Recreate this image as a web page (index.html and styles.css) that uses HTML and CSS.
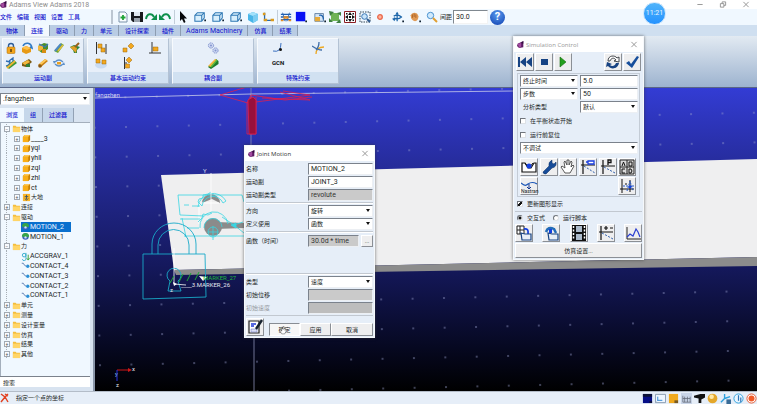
FILE: index.html
```html
<!DOCTYPE html>
<html lang="zh-CN">
<head>
<meta charset="utf-8">
<title>Adams View Adams 2018</title>
<link rel="stylesheet" href="styles.css">
</head>
<body>
<svg class="defs" aria-hidden="true">
  <defs>
    <symbol id="logo" viewBox="0 0 10 10"><path d="M1 4 9 0v9L3 10 0 7z" fill="#5c1a63"/><path d="M1 4 6 3v5L3 10z" fill="#a34aa0"/><path d="M6 3l3-3v4z" fill="#2d0b3a"/></symbol>
    <symbol id="cube" viewBox="0 0 14 12"><path d="M1 4 4 1h8v6l-3 4H1z" fill="#d9effc"/><path d="M1 4 4 1h8v6l-3 4H1zM1 4h8l3-3M9 4v7" fill="none" stroke="#2f78b4" stroke-width="1.200"/><path d="M12 9h2v2h-2z" fill="#123"/></symbol>
    <symbol id="block" viewBox="0 0 10 10"><path d="M1 3 3 1h6v6L7 9H1z" fill="#c47f06"/><path d="M1 3h6v6H1z" fill="#f9ae16"/><path d="M1 3 3 1h6L7 3z" fill="#ffc84f"/></symbol>
    <symbol id="ground" viewBox="0 0 10 10"><path d="M1 1h8v8H1z" fill="#f9b428"/><path d="M5 2v5M3 4h4M3 6l2 2 2-2" fill="none" stroke="#3a5566"/></symbol>
    <symbol id="folder" viewBox="0 0 10 8"><path d="M1 1h3l1 1h4v6H1z" fill="#f3bd3c"/><path d="M1 3h8v5H1z" fill="#ffd567"/></symbol>
    <symbol id="motion" viewBox="0 0 10 10"><circle cx="5" cy="5" r="3.600" fill="#3a62b8"/><path d="M1 5a4 4 0 0 1 8 0L6 6z" fill="#37a548"/><circle cx="5" cy="6" r="1.300" fill="#cfe2ff"/></symbol>
    <symbol id="contact" viewBox="0 0 12 8"><path d="M1 1 3 1 5 4l2 1" fill="none" stroke="#3b5f9e"/><circle cx="9" cy="5" r="2.200" fill="#2b8fd6"/></symbol>
    <symbol id="accel" viewBox="0 0 10 10"><circle cx="3.500" cy="3.500" r="2" fill="none" stroke="#2aa7c9"/><path d="M5.500 1v6a2 2 0 0 1-4 1" fill="none" stroke="#2aa7c9"/><path d="M8 3v5M6.500 7 8 9l1.500-2" fill="none" stroke="#2d9b2d"/></symbol>
    <symbol id="lock" viewBox="0 0 12 12"><path d="M3.500 6V4a2.500 2.500 0 0 1 5 0v2" fill="none" stroke="#2d5d9a" stroke-width="1.400"/><rect x="2" y="5" width="8" height="6.500" rx="1" fill="#f3a51c" stroke="#a96b07" stroke-width=".5"/><path d="M6 7v3" stroke="#4a3510" stroke-width="1.400"/></symbol>
    <symbol id="revolute" viewBox="0 0 12 12"><path d="M1 6 5 4l5 2v4l-5 2-4-2z" fill="#e79a16"/><path d="M1 6 5 4l5 2-4 2z" fill="#ffc04a"/><path d="M2 4C4 0 10 0 11 6l-2-1" fill="none" stroke="#2f79c4" stroke-width="1.600"/></symbol>
    <symbol id="translate" viewBox="0 0 12 12"><path d="M1 4 7 1l4 1v5l-6 4-4-3z" fill="#4b8e2a"/><path d="M1 4 6 3v4l-3 2-2-1z" fill="#f2b53a"/><path d="M2 2l6 3 3-3" fill="none" stroke="#3a76b5" stroke-width="1.200"/><path d="M5 7h4v4H5z" fill="#d78e12"/></symbol>
    <symbol id="cyl" viewBox="0 0 12 12"><path d="M1 9 8 1l3 2-6 8z" fill="#6ea838"/><path d="M2 9 8 2" stroke="#4d87c7" stroke-width="2"/><path d="M5 9 10 3" stroke="#e6bd3c" stroke-width="1.500"/></symbol>
    <symbol id="ball" viewBox="0 0 12 12"><path d="M1 5l4-2 6 2-3 3v3H5L4 8z" fill="#2e8440"/><path d="M1 5l4-1 3 2-1 5-3-3z" fill="#e2a025"/><path d="M6 5l4-4" stroke="#99611b" stroke-width="2"/></symbol>
    <symbol id="screw" viewBox="0 0 12 12"><path d="M1 9 9 3l3 3-8 6z" fill="#3c9636"/><path d="M1 4l4 1-1 3-3 1M4 4l4-3v4" fill="none" stroke="#2d6db4" stroke-width="1.300"/><path d="M2 11l8-7" stroke="#efb534" stroke-width="1.800"/></symbol>
    <symbol id="planar" viewBox="0 0 12 12"><path d="M1 6l7-4 3 3-6 5-4-1z" fill="#7b5a12"/><path d="M1 6l6-3 2 2-5 3z" fill="#f2b73c"/><path d="M5 7h4v3H5z" fill="#33803a"/></symbol>
    <symbol id="rod" viewBox="0 0 12 12"><path d="M1 8 8 2l3 2-7 6z" fill="#c97f13"/><path d="M2 7 8 2l2 1-6 5z" fill="#ffc95a"/><circle cx="3" cy="9" r="1.800" fill="#8a5814"/></symbol>
    <symbol id="hooke" viewBox="0 0 12 12"><path d="M2 5q4-4 8 0M10 7q-4 4-8 0" fill="none" stroke="#5d8fc8" stroke-width="1.200"/><path d="M4 5h4v2.500H4z" fill="#eaa022"/><path d="M0 4l3 0-2 3zM12 8l-3 0 2-3z" fill="#5d8fc8"/></symbol>
    <symbol id="gearbelt" viewBox="0 0 12 12"><path d="M1 10 9 2l2.500 2v3L4 12z" fill="#1d7a2c"/><path d="M1 9 8 2l2 1-6 7z" fill="#f2b63b"/><path d="M4 10 10 3" stroke="#56b83e" stroke-width="1.500"/></symbol>
    <symbol id="primA" viewBox="0 0 12 12"><path d="M1.500 0v12M11 2v10" stroke="#333"/><path d="M3 2h4v4H3zM6 6h4v4H6z" fill="#f4a81e" stroke="#9b6a13" stroke-width=".5"/></symbol>
    <symbol id="primB" viewBox="0 0 12 12"><path d="M1 6h4v4H1zM9 1l3 3-3 3-3-3z" fill="#f4a81e" stroke="#9b6a13" stroke-width=".5"/></symbol>
    <symbol id="primC" viewBox="0 0 12 12"><path d="M3 0v11M0 11h12" stroke="#333" fill="none"/><path d="M4 5h5v4H4z" fill="#f4a81e" stroke="#9b6a13" stroke-width=".5"/></symbol>
    <symbol id="primD" viewBox="0 0 12 12"><ellipse cx="6" cy="8" rx="6" ry="3.500" fill="#c8dbf2"/><path d="M1 2h4v4H1zM7 3h4v4H7z" fill="#f4a81e" stroke="#9b6a13" stroke-width=".5"/></symbol>
    <symbol id="primE" viewBox="0 0 12 12"><path d="M2.500 0v12M2 6h3" stroke="#333"/><path d="M3.500 7h4v4h-4zM7 0l3 3-3 3-3-3z" fill="#f4a81e" stroke="#9b6a13" stroke-width=".5"/></symbol>
    <symbol id="gears" viewBox="0 0 12 12"><g fill="#cfd9f2" stroke="#8294cf"><circle cx="4" cy="3.500" r="2.600" stroke-dasharray="1.500 .6"/><circle cx="8.500" cy="8.500" r="2.600" stroke-dasharray="1.500 .6"/></g><circle cx="4" cy="3.500" r="1" fill="#8294cf"/><circle cx="8.500" cy="8.500" r="1" fill="#8294cf"/></symbol>
    <symbol id="ptcurve" viewBox="0 0 12 12"><path d="M1 9q8 2 8-8" fill="none" stroke="#3a6fc0"/><circle cx="8.500" cy="7.500" r="1.500" fill="#111"/></symbol>
    <symbol id="curves" viewBox="0 0 12 12"><path d="M4 12q0-7 8-7" fill="none" stroke="#eea923" stroke-width="1.300"/><path d="M0 4q6 4 10 4M7 0q0 5-3 8" fill="none" stroke="#3f6ea8" stroke-width="1.300"/></symbol>
    <symbol id="new" viewBox="0 0 12 12"><path d="M2 1h6l2 2v8H2z" fill="#f9fcff" stroke="#7a93ab"/><path d="M6 4v5M3.500 6.500h5" stroke="#20a338" stroke-width="1.800"/></symbol>
    <symbol id="save" viewBox="0 0 12 12"><path d="M0 1h12v10H2L0 9z" fill="#17191e"/><path d="M3 1h6v4H3z" fill="#dfe7ef"/><path d="M3 7h6v4H3z" fill="#9aa3ad"/></symbol>
    <symbol id="redo" viewBox="0 0 12 12"><path d="M1 8C2 2 7 2 9 6" fill="none" stroke="#0d8f4c" stroke-width="2"/><path d="M12 3v6H6z" fill="#0d8f4c"/></symbol>
    <symbol id="arrow" viewBox="0 0 12 12"><path d="M4 0v10l2-2 2 4 1.500-1L8 7.500h3z" fill="#05070a"/></symbol>
    <symbol id="ccube" viewBox="0 0 12 12"><path d="M6 1l5 2v6l-5 3-5-3V3z" fill="#48b5e8"/><path d="M6 1l5 2-5 2-5-2z" fill="#a4e2fb"/><path d="M6 5v7l5-3V3z" fill="#7bcdf2"/></symbol>
    <symbol id="axes" viewBox="0 0 14 12"><path d="M3 1v9h9" fill="none" stroke="#2b69a8" stroke-width="1.500"/><path d="M2 8h4v3H2zM1 1h3v3H1zM10 8h4v3h-4z" fill="#dc9b1e"/></symbol>
    <symbol id="grid" viewBox="0 0 14 12"><path d="M1 3h12M1 6h12M1 9h12" stroke="#1f5fb2" stroke-width="1.500"/><path d="M3 1l3 10M11 1 8 11" stroke="#1f5fb2"/><path d="M4 5h6v3H4zM1 9h3v2H1zM10 9h3v2h-3z" fill="#e48e28"/></symbol>
    <symbol id="blue" viewBox="0 0 14 12"><path d="M1 0h11v11H1z" fill="#0711f5"/><path d="M12 10h2v2h-2z" fill="#123"/></symbol>
    <symbol id="winrot" viewBox="0 0 14 12"><path d="M1 2h10v9H1z" fill="#d5e5f6" stroke="#57799d"/><path d="M1 6h6v5H1z" fill="#e6aa38"/><path d="M6 4q5-1 5 5" fill="none" stroke="#1c62ae" stroke-width="1.500"/><path d="M12 10h2v2h-2z" fill="#123"/></symbol>
    <symbol id="fit" viewBox="0 0 12 12"><path d="M2 2h8v8H2z" fill="#6fb356"/><path d="M0 0l5 1-4 4zM12 1v4L8 2zM0 7l4 4-4 0zM12 12H7l4-4z" fill="#3f7f42"/></symbol>
    <symbol id="center" viewBox="0 0 12 12"><path d="M.5.500h11v11H.5z" fill="#fff" stroke="#8b1d22"/><path d="M6 1l2 3H4zM6 11 4 8h4zM1 6l3-2v4zM11 6 8 8V4zM5 5h2v2H5zM2 2h1.500v1.500H2zM8.500 2H10v1.500H8.500zM2 8.500h1.500V10H2zM8.500 8.500H10V10H8.500z" fill="#111"/></symbol>
    <symbol id="zoombox" viewBox="0 0 12 12"><path d="M1 1h10v10H1z" fill="none" stroke="#345" stroke-dasharray="1.500 1"/><circle cx="5.500" cy="5.500" r="2.800" fill="#c9e4fa" stroke="#3a77b5"/><path d="M8 8l3 3" stroke="#2e5c91" stroke-width="2"/></symbol>
    <symbol id="dot" viewBox="0 0 12 12"><circle cx="6" cy="6" r="2.300" fill="#ffb49d" stroke="#e9674a" stroke-width="1.300"/></symbol>
    <symbol id="orbit" viewBox="0 0 14 12"><path d="M6 1v10M2 5q5-3 9 1-4 4-9 1" fill="none" stroke="#1d67ab" stroke-width="1.500"/><path d="M4 3l2-3 2 3zM0 8l4-1-1 4z" fill="#1d67ab"/><path d="M12 10h2v2h-2z" fill="#123"/></symbol>
    <symbol id="pan" viewBox="0 0 14 12"><path d="M2 4q1-3 4-3 4 0 5 4 0 5-4 6-5-1-5-7" fill="#e09a55"/><path d="M4 7V3M6 6V2M8 7V3" stroke="#a85f22"/><path d="M12 10h2v2h-2z" fill="#123"/></symbol>
    <symbol id="mag" viewBox="0 0 12 12"><circle cx="4.500" cy="4.500" r="3.200" fill="#d0eafd" stroke="#4b93d0"/><path d="M7 7l4 4" stroke="#e19f31" stroke-width="2"/></symbol>
    <symbol id="rewind" viewBox="0 0 16 16"><path d="M1 3h2v10H1zM9 3v10L3 8zM15 3v10L9 8z" fill="#174383"/></symbol>
    <symbol id="stop" viewBox="0 0 16 16"><path d="M5 5h7v6H5z" fill="#174383"/></symbol>
    <symbol id="play" viewBox="0 0 16 16"><path d="M5 3l6 5-6 5z" fill="#24a01c" stroke="#14690e" stroke-width=".6"/></symbol>
    <symbol id="reload" viewBox="0 0 16 16"><path d="M3 7C3 1 10 1 12 4l2-1v5l-5-1 2-1C9 3 6 4 5 7z" fill="#fff" stroke="#30343a" stroke-width=".9"/><path d="M14 9c-1 6-8 7-11 3l-2 1 1-5 5 2-2 1c2 2 5 1 6-2z" fill="#174383"/></symbol>
    <symbol id="check" viewBox="0 0 16 16"><path d="M2 9l3-2 2 3 6-8 2 1-7 11z" fill="#174e9b"/></symbol>
    <symbol id="valley" viewBox="0 0 16 16"><path d="M1 4h3l3 5h3l3-5h2v9H1z" fill="#fff" stroke="#111" stroke-width="1.200"/><path d="M4 4l4 5 4-5" fill="none" stroke="#111"/><circle cx="8" cy="7" r="2.500" fill="#1440e0"/></symbol>
    <symbol id="wrench" viewBox="0 0 16 16"><path d="M2 13 8 7q-1-4 3-6v3l2 1 2-2q1 5-4 6L5 15q-3 0-3-2" fill="#174c99" stroke="#0b2d60" stroke-width=".5"/></symbol>
    <symbol id="hand" viewBox="0 0 16 16"><path d="M5 14 1 8l1-1 3 2-1-6 1-1 2 4V1h2v5l2-4 1 1-1 5 2-2 1 1-4 7z" fill="#fff" stroke="#333" stroke-width=".8"/></symbol>
    <symbol id="plotd" viewBox="0 0 16 16"><path d="M3 1v14M1 6h14" fill="none" stroke="#111" stroke-width="1.200"/><path d="M4 7l11 7" stroke="#2b5cab" stroke-dasharray="2 1.500"/><path d="M8 2h6v3H8zM6 3h2" fill="#fff" stroke="#1b3fe0" stroke-width="1.300"/></symbol>
    <symbol id="plotp" viewBox="0 0 16 16"><path d="M3 1v14M1 7h14" fill="none" stroke="#111" stroke-width="1.200"/><path d="M4 8l11 6" stroke="#2b5cab" stroke-dasharray="2 1.500"/><path d="M8 6V1h3v2.500H8" fill="none" stroke="#111" stroke-width="1.300"/></symbol>
    <symbol id="table" viewBox="0 0 16 16"><path d="M1 1h14v14H1zM8 1v14M1 8h14" fill="#d9d9d9" stroke="#222"/><path d="M3 7l1.500-4L6 7M10 3h3v4h-3zM6 10H3v4h3M10 10h2l1 2-1 2h-2z" fill="none" stroke="#111"/></symbol>
    <symbol id="neutral" viewBox="0 0 16 12"><path d="M0 3q4 4 7 1 4-3 9 0" fill="none" stroke="#1c57b8" stroke-width="1.200"/><path d="M8 4v5M6 7l2 2 2-2" fill="none" stroke="#15378f"/></symbol>
    <symbol id="plotc" viewBox="0 0 16 16"><path d="M3 1v14M1 11h14M11 2v12M6 6h2" fill="none" stroke="#111"/><path d="M4 8h11M8 13l3-10 3 10" fill="none" stroke="#2458c8" stroke-dasharray="2 1"/><circle cx="11" cy="9" r="1.500" fill="#1440e0"/></symbol>
    <symbol id="build" viewBox="0 0 16 16"><path d="M1 1h7v8H1zM4 1v8M1 5h7" fill="#fff" stroke="#222"/><path d="M8 4q5-1 4 5" fill="none" stroke="#1440e0" stroke-width="1.800"/><path d="M5 8l4 1 6 0v6H6z" fill="#e8eef6" stroke="#174383" stroke-width="1.200"/></symbol>
    <symbol id="reset" viewBox="0 0 16 16"><path d="M3 7q2-6 8-3l2 4" fill="none" stroke="#236cb8" stroke-width="2.500"/><path d="M6 4h3v4H6z" fill="#1440e0"/><path d="M5 8l4 1 6 0v6H6z" fill="#e8eef6" stroke="#174383" stroke-width="1.200"/></symbol>
    <symbol id="film" viewBox="0 0 16 16"><path d="M1 0h14v16H1z" fill="#111"/><path d="M5 1h6v6H5zM5 9h6v6H5z" fill="#aebccc"/><path d="M2.500 1v14M13.500 1v14" stroke="#fff" stroke-width="1.500" stroke-dasharray="2 1.500"/></symbol>
    <symbol id="plotpm" viewBox="0 0 16 16"><path d="M3 1v14M1 7h14M6 3h4M12 3h3M8 1v4" fill="none" stroke="#111" stroke-width="1.200"/><path d="M4 8l11 6" stroke="#2b5cab" stroke-dasharray="2 1.500"/></symbol>
    <symbol id="chart" viewBox="0 0 16 16"><path d="M2 2v12h14" fill="none" stroke="#222"/><path d="M2 12l3-3 3 2 3-7 2 3 2 5" fill="none" stroke="#2a3fd0" stroke-width="1.200"/></symbol>
    <symbol id="edit" viewBox="0 0 16 16"><path d="M2 2h10v12H2z" fill="#fff" stroke="#222" stroke-width="1.200"/><path d="M4 5h5M4 7h3" stroke="#2038d8" stroke-width="1.500"/><path d="M4 10h6v3H4z" fill="#dcdff5" stroke="#6670c0" stroke-width=".5"/><path d="M15 1 9 10" stroke="#16222f" stroke-width="2.400"/></symbol>
  </defs>
</svg>

<div class="app">
  <header class="titlebar">
    <svg class="logo"><use href="#logo"/></svg>
    <h1>Adams View Adams 2018</h1>
    <div class="winctl">
      <button aria-label="最小化"><svg viewBox="0 0 8 8"><path d="M1 4h6"/></svg></button>
      <button aria-label="还原"><svg viewBox="0 0 8 8"><path d="M1 3h4v4H1zM3 3V1h4v4H5"/></svg></button>
      <button aria-label="关闭"><svg viewBox="0 0 8 8"><path d="M1 1l6 6M7 1 1 7"/></svg></button>
    </div>
  </header>

  <div class="toolrow">
    <nav class="menu"><button>文件</button><button>编辑</button><button>视图</button><button>设置</button><button>工具</button></nav>
    <div class="tools t14 first">
      <button aria-label="新建"><svg><use href="#new"/></svg></button>
      <button aria-label="保存"><svg><use href="#save"/></svg></button>
      <button aria-label="重做"><svg><use href="#redo"/></svg></button>
      <button aria-label="撤销" class="flip"><svg><use href="#redo"/></svg></button>
    </div>
    <div class="tools t14 ruled"><button aria-label="选择"><svg><use href="#arrow"/></svg></button></div>
    <div class="tools t18">
      <button aria-label="前视"><svg><use href="#cube"/></svg></button>
      <button aria-label="右视"><svg><use href="#cube"/></svg></button>
      <button aria-label="顶视"><svg><use href="#cube"/></svg></button>
    </div>
    <div class="tools t15">
      <button aria-label="轴测"><svg><use href="#ccube"/></svg></button>
      <button aria-label="坐标"><svg><use href="#axes"/></svg></button>
    </div>
    <div class="tools t15 ruled">
      <button aria-label="栅格"><svg><use href="#grid"/></svg></button>
      <button aria-label="颜色"><svg><use href="#blue"/></svg></button>
    </div>
    <div class="tools t15 wide">
      <button aria-label="视图布局"><svg><use href="#winrot"/></svg></button>
      <button aria-label="适合窗口"><svg><use href="#fit"/></svg></button>
      <button aria-label="居中"><svg><use href="#center"/></svg></button>
      <button aria-label="框选缩放"><svg><use href="#zoombox"/></svg></button>
      <button aria-label="选点"><svg><use href="#dot"/></svg></button>
    </div>
    <div class="tools t17">
      <button aria-label="旋转"><svg><use href="#orbit"/></svg></button>
      <button aria-label="平移"><svg><use href="#pan"/></svg></button>
      <button aria-label="缩放"><svg><use href="#mag"/></svg></button>
    </div>
    <label class="spacing">间距 <input value="30.0"></label>
    <button class="help" aria-label="帮助">?</button>
  </div>
  <div class="clock">11:21</div>

  <nav class="tabs">
    <button>物体</button><button class="on">连接</button><button>驱动</button><button>力</button><button>单元</button><button>设计探索</button><button>插件</button><button class="latin">Adams Machinery</button><button>仿真</button><button>结果</button>
  </nav>

  <div class="ribbon">
    <section class="panel">
      <div class="icons five">
        <svg><use href="#lock"/></svg><svg><use href="#revolute"/></svg><svg><use href="#translate"/></svg><svg><use href="#cyl"/></svg><svg><use href="#ball"/></svg>
        <svg><use href="#screw"/></svg><svg><use href="#planar"/></svg><svg><use href="#rod"/></svg><svg><use href="#hooke"/></svg>
      </div>
      <h2>运动副</h2>
    </section>
    <section class="panel">
      <div class="icons three">
        <svg><use href="#primA"/></svg><svg><use href="#primB"/></svg><svg><use href="#primC"/></svg>
        <svg><use href="#primD"/></svg><svg><use href="#primE"/></svg>
      </div>
      <h2>基本运动约束</h2>
    </section>
    <section class="panel">
      <div class="icons one"><svg><use href="#gears"/></svg><svg><use href="#gearbelt"/></svg></div>
      <h2>耦合副</h2>
    </section>
    <section class="panel">
      <div class="icons two"><svg><use href="#ptcurve"/></svg><svg><use href="#curves"/></svg><span>GCN</span></div>
      <h2>特殊约束</h2>
    </section>
  </div>

  <main class="work">
    <aside class="side">
      <span class="sel model"><select aria-label="模型"><option>.fangzhen</option></select></span>
      <nav class="sidetabs"><button class="on">浏览</button><button>组</button><button>过滤器</button></nav>
      <ul class="tree">
        <li><i>−</i><svg><use href="#folder"/></svg>物体</li>
        <li class="sub"><i>+</i><svg><use href="#block"/></svg>____3</li>
        <li class="sub"><i>+</i><svg><use href="#block"/></svg>yql</li>
        <li class="sub"><i>+</i><svg><use href="#block"/></svg>yhll</li>
        <li class="sub"><i>+</i><svg><use href="#block"/></svg>zql</li>
        <li class="sub"><i>+</i><svg><use href="#block"/></svg>zhl</li>
        <li class="sub"><i>+</i><svg><use href="#block"/></svg>ct</li>
        <li class="sub cjk"><i>+</i><svg><use href="#ground"/></svg>大地</li>
        <li><i>+</i><svg><use href="#folder"/></svg>连接</li>
        <li><i>−</i><svg><use href="#folder"/></svg>驱动</li>
        <li class="leaf"><span class="picked"><svg><use href="#motion"/></svg>MOTION_2</span></li>
        <li class="leaf"><svg><use href="#motion"/></svg>MOTION_1</li>
        <li><i>−</i><svg><use href="#folder"/></svg>力</li>
        <li class="leaf"><svg><use href="#accel"/></svg>ACCGRAV_1</li>
        <li class="leaf"><svg><use href="#contact"/></svg>CONTACT_4</li>
        <li class="leaf"><svg><use href="#contact"/></svg>CONTACT_3</li>
        <li class="leaf"><svg><use href="#contact"/></svg>CONTACT_2</li>
        <li class="leaf"><svg><use href="#contact"/></svg>CONTACT_1</li>
        <li><i>+</i><svg><use href="#folder"/></svg>单元</li>
        <li><i>+</i><svg><use href="#folder"/></svg>测量</li>
        <li><i>+</i><svg><use href="#folder"/></svg>设计变量</li>
        <li><i>+</i><svg><use href="#folder"/></svg>仿真</li>
        <li><i>+</i><svg><use href="#folder"/></svg>结果</li>
        <li><i>+</i><svg><use href="#folder"/></svg>其他</li>
      </ul>
      <input class="search" aria-label="搜索" value="搜索">
    </aside>

    <div class="view">
      <svg viewBox="95 88 662 303" preserveAspectRatio="xMinYMin slice">
        <defs>
          <pattern id="dots" width="31.400" height="29.700" patternUnits="userSpaceOnUse" patternTransform="translate(125 126) rotate(-1.300)"><path d="M0 1h2" stroke="#9aa0cf" stroke-width=".8"/></pattern>
        </defs>
        <path d="M95 88h662v303H95z" fill="url(#dots)"/>
        <path d="M95 98 251 94 515 91" fill="none" stroke="#c9cdea" stroke-width=".8"/>
        <path d="M251 88v57M254 337v54" stroke="#8b91b5" stroke-width=".8"/>
        <g fill="none" stroke="#e0204c" stroke-width=".8">
          <path d="M220 95l27-8M220 95l28 8 62-8-27-4M247 103l4-8 34 5 27-3M247 103v31h9V97M251 96v38M254 98v35M262 98l48 2-30-8"/>
          <path d="M248 100l5-3 3 3v34h-7z" fill="#99103c"/>
        </g>
        <path d="M161 175 757 159V257L174 270z" fill="#efeff0"/>
        <path d="M174 270 757 257v9L176 275z" fill="#8c8c8c"/>
        <g fill="#8b8b8b">
          <path d="M202 203a9 9 0 0 1 18 0l-8-4z"/>
          <circle cx="213" cy="227" r="9"/>
          <path d="M215 222l30 1v5l-30 1z"/>
        </g>
        <path d="M199 203V224M202 203h17" stroke="#fff" fill="none"/>
        <g fill="none" stroke="#39d6e2" stroke-width=".8">
          <path d="M178 195h64l2 7M178 195l2 20 24 1M180 219h20M184 236h60M182 218l4 19M184 205h5M192 206h8M187 228h12"/>
          <path d="M198 207a15 15 0 0 1 28-6l-3 2a11 11 0 0 0-21 3l-4-4 1-3 4-1v-3l5-1 3-2"/>
          <path d="M200 228a13 13 0 0 1 28-4M198 222l4-4 1-4 5 1 4-2M204 228a9 9 0 0 1 18-1"/>
          <circle cx="213" cy="232" r="5"/><path d="M213 226v14M208 232h10M222 217l12 8 9-3M234 225l10 8"/>
          <path d="M231 225l5-2v5z" fill="#39d6e2"/>
        </g>
        <g fill="none" stroke="#18a9c8" stroke-width=".9">
          <path d="M143 254h62l1 43-63 2zM152 254v-10a22 21 0 0 1 44 0v10M158 254v-9a15 15 0 0 1 31 0v9"/>
          <path d="M170 281a7 7 0 1 1 8 0l3 10h-13z"/>
        </g>
        <path d="M211 173v38M174 248v36l12 1" fill="none" stroke="#fff" stroke-width=".8"/>
        <path d="M170 283l4-7M179 282l4-8M187 281l4-8M195 280l4-8" stroke="#20a735"/>
        <path d="M173 282l4 2-3 2zM199 276l8 1-4 4z" fill="#fff"/>
        <g class="marks">
          <text x="95" y="97" fill="#dadcf2">fangzhen</text>
          <text x="203" y="280" fill="#20b83c">MARKER_27</text>
          <text x="181" y="287" fill="#e5e7f0">____3.MARKER_26</text>
          <text x="203" y="173" fill="#d8dbef">Y</text>
          <text x="170" y="292" fill="#e5e7f0">z</text>
          <text x="132" y="371" fill="#e5e7f0">x</text>
          <text x="115" y="376" fill="#a8dbe5">y</text>
          <text x="116" y="387" fill="#e5e7f0">z</text>
        </g>
        <path d="M117 370h13" stroke="#cf1717"/><path d="M128 368l4 2-4 2z" fill="#cf1717"/>
        <path d="M117 370v11" stroke="#2433e4"/>
      </svg>
    </div>
  </main>

  <footer class="status">
    <svg class="hint" viewBox="0 0 10 10"><path d="M1 1l4 3 3 5M8 1 5 4 1 9M5 1l3 2" fill="none" stroke="#e2401f" stroke-width="1.400"/></svg>
    <span>指定一个点的坐标</span>
    <div class="tray">
      <svg viewBox="0 0 12 12"><path d="M1 1h10v10H1z" fill="#060e86"/><path d="M1 1h10v3H1zM8 9h3v2H8z" fill="#0b1136"/></svg>
      <svg viewBox="0 0 12 12"><path d="M.5 1.500h11v9H.5z" fill="#eef6ff" stroke="#8697ac"/><path d="M3 4v4l-1 1M3 8h5" fill="none" stroke="#2b84d2"/></svg>
      <svg viewBox="0 0 12 12"><path d="M1 1h10v10H1z" fill="#f0a91d"/><path d="M7 8h4v3H7z" fill="#7a5b22"/></svg>
      <svg viewBox="0 0 12 12"><path d="M0 0h12v12H0z" fill="#c9d5e8"/><path d="M2 3v7h9M4 4v6M7 4v6M10 4v6M2 6h8" fill="none" stroke="#5e6673" stroke-width=".8"/></svg>
      <svg viewBox="0 0 12 12"><path d="M0 3 7 1h5v4L8 7v4H5V6L0 5z" fill="#111"/></svg>
      <svg viewBox="0 0 12 12"><circle cx="6" cy="6" r="5.300" fill="#e4a72a"/><circle cx="5" cy="4" r="2.500" fill="#ffe9a8"/></svg>
      <svg viewBox="0 0 12 12"><path d="M5 1v5L1 10M5 6l6-2" fill="none" stroke="#2da0dd" stroke-width="1.500"/><path d="M7 7h5v5H7z" fill="#3a6c97"/></svg>
      <svg viewBox="0 0 12 12"><circle cx="6" cy="6" r="5" fill="#e8f5ff" stroke="#2aa0dc"/><path d="M6 2.500v6M8.500 5v5" stroke="#2a74b8" stroke-width="1.300"/></svg>
      <svg viewBox="0 0 12 12"><circle cx="6" cy="6" r="5" fill="#fff" stroke="#e4532b"/><circle cx="6" cy="6" r="3.300" fill="#f05a28"/></svg>
    </div>
  </footer>

  <form class="dialog joint">
    <header><svg class="logo"><use href="#logo"/></svg><h2>Joint Motion</h2><button type="button" aria-label="关闭"><svg viewBox="0 0 8 8"><path d="M1 1l6 6M7 1 1 7"/></svg></button></header>
    <div class="fields">
      <label for="j1">名称</label><input id="j1" value="MOTION_2">
      <label for="j2">运动副</label><input id="j2" value="JOINT_3">
      <label for="j3">运动副类型</label><input id="j3" class="off" value="revolute" readonly>
    </div>
    <div class="fields">
      <label for="j4">方向</label><span class="sel"><select id="j4"><option>旋转</option></select></span>
      <label for="j5">定义使用</label><span class="sel"><select id="j5"><option>函数</option></select></span>
    </div>
    <div class="fields tall">
      <label for="j6">函数（时间）</label><span class="pair"><input id="j6" class="off" value="30.0d * time"><button type="button">...</button></span>
    </div>
    <div class="fields">
      <label for="j7">类型</label><span class="sel"><select id="j7"><option>速度</option></select></span>
      <label for="j8">初始位移</label><input id="j8" class="off">
      <label for="j9" class="dim">初始速度</label><input id="j9" class="off deep" disabled>
    </div>
    <div class="actions">
      <button type="button" class="tile" aria-label="注释"><svg><use href="#edit"/></svg></button>
      <button type="button" class="ok">确定<svg class="cursor" viewBox="0 0 16 16"><use href="#hand"/></svg></button><button type="button">应用</button><button type="button" class="cancel">取消</button>
    </div>
  </form>

  <form class="dialog sim">
    <header><svg class="logo"><use href="#logo"/></svg><h2>Simulation Control</h2><button type="button" aria-label="关闭"><svg viewBox="0 0 8 8"><path d="M1 1l6 6M7 1 1 7"/></svg></button></header>
    <div class="player">
      <button type="button" class="tile" aria-label="重置"><svg><use href="#rewind"/></svg></button>
      <button type="button" class="tile" aria-label="停止"><svg><use href="#stop"/></svg></button>
      <button type="button" class="tile" aria-label="开始"><svg><use href="#play"/></svg></button>
      <button type="button" class="tile push" aria-label="重新运行"><svg><use href="#reload"/></svg></button>
      <button type="button" class="tile" aria-label="验证"><svg><use href="#check"/></svg></button>
    </div>
    <div class="box">
      <div class="params">
        <span class="sel"><select aria-label="时间类型"><option>终止时间</option></select></span><input aria-label="终止时间" value="5.0">
        <span class="sel"><select aria-label="步类型"><option>步数</option></select></span><input aria-label="步数" value="50">
        <label for="s1">分析类型</label><span class="sel"><select id="s1"><option>默认</option></select></span>
      </div>
      <label class="tick"><input type="checkbox">在平衡状态开始</label>
      <label class="tick"><input type="checkbox">运行前复位</label>
      <span class="sel"><select aria-label="调试"><option>不调试</option></select></span>
      <div class="tiles six">
        <button type="button" class="tile" aria-label="静平衡"><svg><use href="#valley"/></svg></button>
        <button type="button" class="tile" aria-label="装配"><svg><use href="#wrench"/></svg></button>
        <button type="button" class="tile" aria-label="手动"><svg><use href="#hand"/></svg></button>
        <button type="button" class="tile" aria-label="线性"><svg><use href="#plotd"/></svg></button>
        <button type="button" class="tile" aria-label="参数"><svg><use href="#plotp"/></svg></button>
        <button type="button" class="tile" aria-label="矩阵"><svg><use href="#table"/></svg></button>
        <button type="button" class="tile nastran"><svg><use href="#neutral"/></svg><span>Nastran</span></button>
        <button type="button" class="tile last" aria-label="振动"><svg><use href="#plotc"/></svg></button>
      </div>
    </div>
    <label class="tick update"><input type="checkbox" checked>更新图形显示</label>
    <div class="mode">
      <label class="tick"><input type="radio" name="m" checked>交互式</label>
      <label class="tick"><input type="radio" name="m">运行脚本</label>
    </div>
    <div class="tiles five">
      <button type="button" class="tile" aria-label="保存模型"><svg><use href="#build"/></svg></button>
      <button type="button" class="tile" aria-label="恢复模型"><svg><use href="#reset"/></svg></button>
      <button type="button" class="tile" aria-label="动画"><svg><use href="#film"/></svg></button>
      <button type="button" class="tile" aria-label="特征值"><svg><use href="#plotpm"/></svg></button>
      <button type="button" class="tile" aria-label="绘图"><svg><use href="#chart"/></svg></button>
    </div>
    <button type="button" class="settings">仿真设置...</button>
  </form>
</div>
</body>
</html>
```

FILE: styles.css
```css
* { box-sizing: border-box; }

body {
  margin: 0;
  font: 6px/8px Roboto, "Noto Sans CJK SC", sans-serif;
  color: #1b1f26;
  overflow: hidden;
}

button, input, select {
  font: inherit;
  color: inherit;
  margin: 0;
  padding: 0;
  border: 0;
  border-radius: 0;
  background: none;
}

h1, h2, ul { margin: 0; padding: 0; font: inherit; list-style: none; }
svg { display: block; }
.defs { position: absolute; width: 0; height: 0; }

.app {
  position: relative;
  height: 100vh;
  display: grid;
  grid-template-rows: 9px 16px 11px 52px minmax(0, 1fr) 13px;
  grid-template-columns: minmax(0, 1fr);
  background: #e6eef8;
}

/* Title bar */
.titlebar { display: flex; align-items: center; background: #fff; }
.logo { width: 7px; height: 7px; }
.titlebar h1 { margin-left: 2px; font-size: 7px; color: #8c8c8c; }
.winctl { display: flex; gap: 15px; margin-left: auto; margin-right: 7px; }
.winctl svg, .dialog header button svg { width: 8px; height: 7px; fill: none; stroke: #8d8d8d; stroke-width: 1; }

/* Menu and toolbar */
.toolrow { display: flex; align-items: center; background: #f0f8ff; }
.menu { display: flex; gap: 5px; width: 111px; color: #1515cf; font-weight: 500; }
.tools { display: flex; height: 14px; align-items: center; }
.tools button { height: 12px; display: flex; justify-content: center; }
.tools svg { width: 12px; height: 12px; }
.t14 button { width: 14px; }
.t15 button { width: 15px; }
.t17 button { width: 17px; }
.t18 button { width: 18px; }
.t17, .t18 { margin-left: 2px; }
.first { border-left: 2px solid #bcc6d1; padding-left: 3px; }
.ruled { border-left: 1px solid #c3ced9; margin-left: 2px; }
.wide { margin-left: 4px; }
.flip svg { transform: scaleX(-1); }
.spacing { display: flex; align-items: center; gap: 1px; color: #222; }
.spacing input { width: 35px; height: 14px; padding-left: 2px; font-size: 7px; background: #fff; border: 1px solid; border-color: #808890 #f3f3f3 #f3f3f3 #808890; }
.help { width: 15px; height: 15px; margin-left: 2px; border-radius: 50%; background: radial-gradient(circle at 50% 30%, #5b9cf0, #0c3eae); color: #fff; font-size: 11px; font-weight: 700; line-height: 14px; }

.clock {
  position: absolute; top: 2px; right: 91px;
  width: 23px; height: 23px; border-radius: 50%;
  border: 1px solid #cfe6fb;
  background: linear-gradient(#50b4fa, #2492ff);
  color: #e9f6ff; font-size: 7px; line-height: 21px; text-align: center;
}

/* Ribbon tabs */
.tabs { display: flex; background: #cfdff0; color: #1515cf; font-weight: 500; }
.tabs button { background: #b9cce4; border-right: 1px solid #8d9db1; padding: 0 6px; }
.tabs button.on { background: #f3f8fe; }
.tabs .latin { font-size: 7px; font-weight: 400; padding: 0 5px; }

/* Ribbon */
.ribbon {
  display: flex; gap: 3px; padding: 2px 2px 3px;
  background: linear-gradient(#e2eaf2, #9db3cf);
  border-bottom: 1px solid #5a6687;
}
.panel { width: 82px; display: flex; flex-direction: column; background: #e7eff9; border: 1px solid #f7fafd; border-right-color: #b3c2d4; border-bottom-color: #b3c2d4; }
.panel h2 { height: 11px; line-height: 11px; text-align: center; background: #d1e1f1; color: #1515cf; font-weight: 500; }
.icons { flex: 1; display: grid; grid-template-rows: 15px 15px; align-content: center; align-items: center; justify-items: center; }
.icons svg { width: 12px; height: 12px; }
.five { grid-template-columns: repeat(5, 1fr); }
.three { grid-template-columns: repeat(3, 1fr); }
.two { grid-template-columns: repeat(2, 1fr); }
.icons span { font-weight: 700; color: #111; }

/* Work area */
.work { display: grid; grid-template: minmax(0, 1fr) / 95px minmax(0, 1fr); min-height: 0; }
.side { display: flex; flex-direction: column; min-height: 0; padding: 5px 3px 4px 0; border-right: 2px solid #8995a8; background: #d8e3f0; }
.model { height: 12px; }
.sel { position: relative; display: block; min-width: 0; }
.sel select {
  appearance: none; display: block; width: 100%; height: 100%; padding: 0 2px;
  background: #fff; border: 1px solid; border-color: #7b828c #eceff3 #eceff3 #7b828c; line-height: 8px;
}
.sel::after { content: ""; position: absolute; right: 3px; top: 4px; border: 2px solid transparent; border-top: 3px solid #111; border-bottom: 0; pointer-events: none; }
.model select { font-size: 7px; }
.sidetabs { display: flex; flex: none; margin-top: 3px; height: 14px; color: #1515cf; font-weight: 500; }
.sidetabs button { padding: 0 6px; background: #c6d7ea; border-right: 1px solid #93a2b5; }
.sidetabs button.on { background: #f0f8ff; border: 0; }

.tree {
  flex: 1; min-height: 0; display: grid; grid-template-rows: repeat(24, minmax(0, 1fr));
  padding: 1px 0 17px; border: 1px solid #a4afbc; border-right: 0; border-bottom: 0;
  background: #f0f8ff;
}
.tree li {
  display: flex; align-items: center; padding-left: 3px; white-space: nowrap;
  background: repeating-linear-gradient(#a8afb6 0 1px, transparent 1px 2px) 5px 0 / 1px 100% no-repeat;
}
.tree i { width: 6px; height: 6px; margin-right: 2px; border: 1px solid #a2aab3; background: #f8fbff; font: 5px/4px Roboto, sans-serif; color: #555; text-align: center; }
.tree svg { width: 9px; height: 9px; }
.tree .sub { padding-left: 13px; font-size: 7px; }
.tree .cjk { font-size: 6px; }
.tree .leaf { padding-left: 20px; font-size: 7px; }
.picked { display: flex; align-items: center; width: 50px; height: 10px; background: #0a70ce; color: #e9f3ff; }
.search { flex: none; height: 11px; width: 100%; padding-left: 3px; background: #fff; border-top: 1px solid #7b828c; }

.view { min-width: 0; min-height: 0; overflow: hidden; background: linear-gradient(#333cd4, #262c9c 25%, #15195e 58%, #060820 86%, #000); }
.view svg { width: 100%; height: 100%; }
.marks text { font: 6px Roboto, sans-serif; }

/* Status bar */
.status { display: flex; align-items: center; border-top: 1px solid #b3bcc8; background: #e6eef8; }
.hint { width: 10px; height: 10px; margin-right: 6px; }
.tray { display: flex; gap: 2px; margin-left: auto; }
.tray svg { width: 11px; height: 11px; }

/* Dialogs */
.dialog {
  position: absolute; width: 131px; padding: 0 1px 1px;
  background: #e6eef8; border: 1px solid #f5f8fb; box-shadow: 0 0 3px #333a;
}
.dialog header { display: flex; align-items: center; height: 15px; margin: 0 -1px; padding: 0 5px 0 3px; background: #fff; }
.dialog header h2 { margin-left: 2px; font: 6px "Open Sans", sans-serif; color: #777; }
.dialog header button { margin-left: auto; }
.dialog input:not([type]) { width: 100%; min-width: 0; height: 12px; padding-left: 2px; font-size: 7px; background: #fff; border: 1px solid; border-color: #7b828c #eceff3 #eceff3 #7b828c; }
.dialog input.off { background: #cacaca; color: #333; }
.dialog input.deep { background: #bdbdbd; }
.dialog .sel { height: 12px; }
.dialog button:not(header button) { background: #eeeeef; border: 1px solid; border-color: #fff #8b8f95 #8b8f95 #fff; }
.tile { width: 18px; height: 18px; display: grid; place-items: center; }
.tile svg { width: 16px; height: 16px; }

.joint { left: 244px; top: 145px; }
.joint header { margin-bottom: 1px; }
.joint header h2 { color: #333; }
.fields {
  display: grid; grid-template-columns: 62px minmax(0, 1fr); align-items: center;
  row-gap: 1px; padding: 1px 0; border-bottom: 1px solid #c2c8d0;
}
.fields + .fields { border-top: 1px solid #fff; }
.dim { color: #969ba2; }
.fields.tall { align-content: start; height: 42px; padding-top: 2px; }
.pair { display: grid; grid-template-columns: 1fr 12px; gap: 2px; }
.actions { display: flex; align-items: flex-end; padding-top: 2px; }
.actions button:not(.tile) { width: 31px; height: 13px; line-height: 10px; }
.actions .ok { position: relative; margin-left: 5px; background: #f7f7f7; border-color: #888d94 #fff #fff #888d94; }
.actions .cancel { flex: 1; }
.cursor { position: absolute; left: 9px; top: 2px; width: 9px; height: 9px; }

.sim { right: 113px; top: 36px; }
.sim header h2 { color: #999; }
.player { display: flex; gap: 1px; padding: 1px 1px 2px; }
.push { margin-left: auto; }
.box { display: flex; flex-direction: column; gap: 1px; margin: 0 2px; padding: 1px 1px 1px 2px; border: 1px solid #c4ccd6; }
.params { display: grid; grid-template-columns: 1fr 1fr; gap: 1px 2px; align-items: center; }
.params label { padding-left: 3px; }
.tick { display: flex; align-items: center; gap: 4px; height: 13px; }
.tick input { appearance: none; width: 6px; height: 6px; background: #fff; border: 1px solid; border-color: #70757c #dde1e6 #dde1e6 #70757c; }
.tick input[type=radio] { border-radius: 50%; }
.tick input[type=radio]:checked { background: radial-gradient(#111 0 1px, #fff 2px); }
.tick input[type=checkbox]:checked { background: linear-gradient(135deg, #fff 30%, #111 30% 70%, #fff 70%); }
.tiles { display: grid; }
.six { grid-template-columns: repeat(6, 1fr); row-gap: 1px; margin-top: 3px; }
.last { grid-column: 6; }
.nastran { display: block; position: relative; }
.nastran svg { height: 12px; }
.nastran span { position: absolute; left: 0; bottom: 0; font-size: 5px; line-height: 5px; }
.update { margin: 0 0 1px 2px; }
.mode { display: flex; gap: 8px; height: 13px; align-items: center; padding-left: 2px; border-top: 1px solid #c2c8d0; }
.mode .tick { height: 10px; }
.five.tiles { justify-content: space-between; grid-template-columns: repeat(5, 18px); }
.settings { display: block; width: 100%; height: 15px; margin-top: 1px; }
```
